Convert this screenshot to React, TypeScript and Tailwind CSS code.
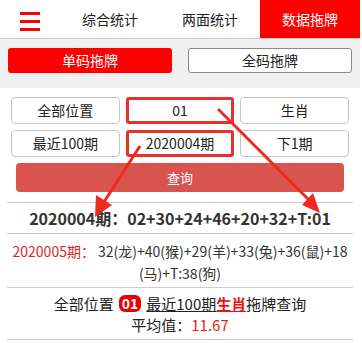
import React from "react";

const font = { fontFamily: '"Noto Sans CJK SC", "Noto Sans", sans-serif' };

export default function App() {
  return (
    <div className="relative w-[360px] bg-white text-[#333]" style={font}>
      {/* header */}
      <div className="flex h-[39px] border-b border-[#cccccc] bg-white">
        <div className="flex w-[60px] flex-col gap-[5px] pl-[20px] pt-[12px]">
          <div className="h-[3px] w-[20px] bg-[#ff0000]" />
          <div className="h-[3px] w-[20px] bg-[#ff0000]" />
          <div className="h-[3px] w-[20px] bg-[#ff0000]" />
        </div>
        <div className="flex flex-1 items-center justify-center text-[14px] text-[#222]">综合统计</div>
        <div className="flex flex-1 items-center justify-center text-[14px] text-[#222]">两面统计</div>
        <div className="flex flex-1 items-center justify-center bg-[#ff0000] text-[14px] text-white">数据拖牌</div>
      </div>

      {/* sub tabs */}
      <div className="grid grid-cols-2 gap-[16px] bg-[#f0f0f0] px-[8px] pb-[15px] pt-[9px]">
        <div className="flex h-[25px] items-center justify-center rounded-[3px] bg-[#ff0000] text-[14px] text-white">单码拖牌</div>
        <div className="flex h-[25px] items-center justify-center rounded-[3px] border border-[#8a8a8a] bg-white text-[14px] text-[#222]">全码拖牌</div>
      </div>

      {/* form */}
      <div className="px-[11px] pt-[9px]">
        <div className="grid grid-cols-3 gap-[6px]">
          <div className="flex h-[27px] items-center justify-center rounded-[4px] border border-[#c4c4c4] text-[14px] text-[#222]">全部位置</div>
          <div className="flex h-[27px] items-center justify-center rounded-[3px] border-[3px] border-[#e8312a] text-[14px] text-[#222]">01</div>
          <div className="flex h-[27px] items-center justify-center rounded-[4px] border border-[#c4c4c4] text-[14px] text-[#222]">生肖</div>
          <div className="flex h-[27px] items-center justify-center rounded-[4px] border border-[#c4c4c4] text-[14px] text-[#222]">最近100期</div>
          <div className="flex h-[27px] items-center justify-center rounded-[3px] border-[3px] border-[#e8312a] text-[14px] text-[#222]">2020004期</div>
          <div className="flex h-[27px] items-center justify-center rounded-[4px] border border-[#c4c4c4] text-[14px] text-[#222]">下1期</div>
        </div>
        <div className="mx-[5px] mt-[6px] flex h-[29px] items-center justify-center rounded-[4px] bg-[#d9534f] text-[13px] text-white">查询</div>
      </div>

      {/* results */}
      <div className="mx-[7px] mt-[10px] border-t border-[#cccccc]">
        <div className="flex h-[30px] items-center justify-center text-[16px] font-bold text-[#333]">
          2020004期：02+30+24+46+20+32+T:01
        </div>
      </div>
      <div className="mx-[7px] border-t border-[#cccccc] pb-[3px] pt-[6px] text-center text-[14px] leading-[22px] text-[#333]">
        <div className="whitespace-nowrap">
          <span className="text-[14px] text-[#e41e1e]">2020005期：</span> 32(龙)+40(猴)+29(羊)+33(兔)+36(鼠)+18
        </div>
        <div>(马)+T:38(狗)</div>
      </div>
      <div className="mx-[7px] border-t border-[#cccccc] pb-[4px] pt-[5px] text-center text-[15px] leading-[21px] text-[#222]">
        <div className="flex items-center justify-center">
          <span>全部位置</span>
          <span className="mx-[5px] inline-flex h-[17px] items-center justify-center rounded-[6px] bg-[#ee0000] px-[3px] text-[14px] font-bold text-white">01</span>
          <span className="underline">最近100期</span>
          <span className="font-bold text-[#ee1111] underline">生肖</span>
          <span>拖牌查询</span>
        </div>
        <div>
          平均值：<span className="text-[#e41e1e]">11.67</span>
        </div>
      </div>
      <div className="mx-[7px] h-[2px] border-t border-[#cccccc]" />

      {/* annotation arrows */}
      <svg className="pointer-events-none absolute left-0 top-0" width="362" height="343" viewBox="0 0 362 343">
        <line x1="140" y1="146" x2="104" y2="202" stroke="#f0291e" strokeWidth="3" />
        <polygon points="95,217 96,195 112,205" fill="#f0291e" />
        <line x1="218" y1="109" x2="311" y2="202" stroke="#f0291e" strokeWidth="3" />
        <polygon points="320,213 302,205 313,193" fill="#f0291e" />
      </svg>
    </div>
  );
}
